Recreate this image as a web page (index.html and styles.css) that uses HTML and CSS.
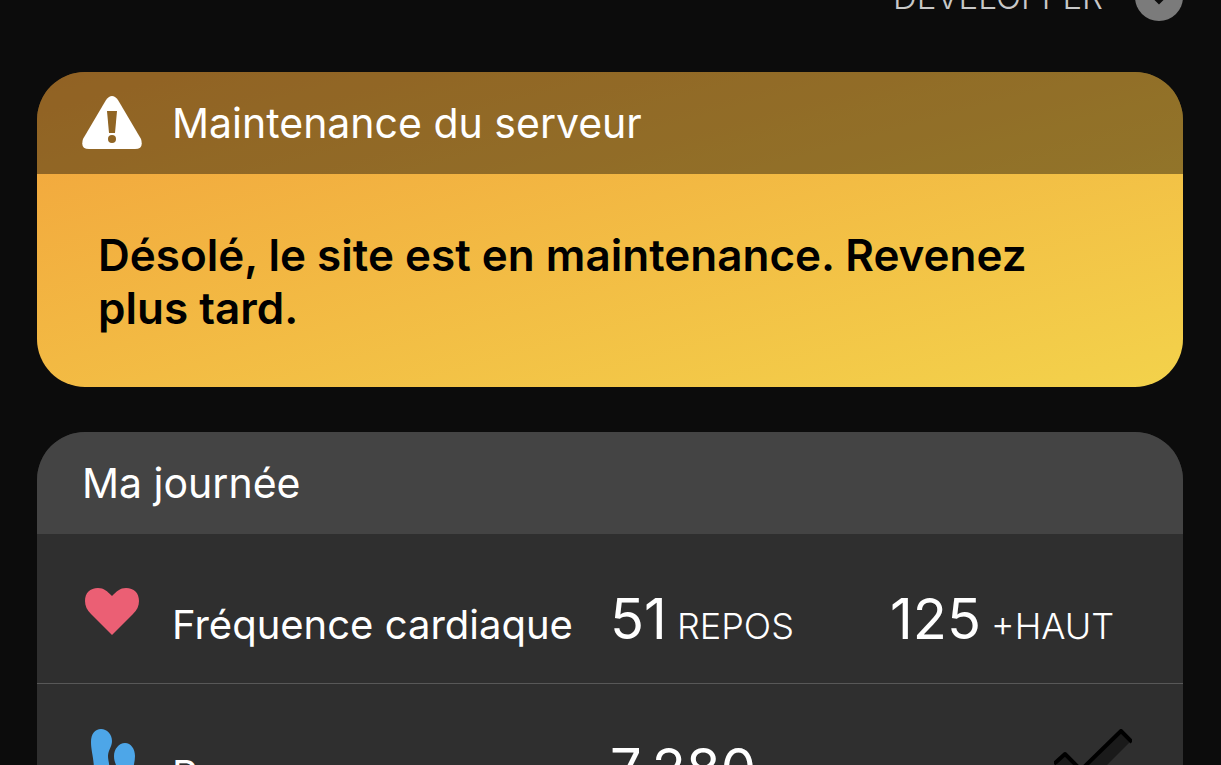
FILE: index.html
```
<!DOCTYPE html>
<html lang="fr">

<head>
    <meta charset="UTF-8">
    <meta name="viewport" content="width=device-width, initial-scale=1.0">
    <title>Ma journée</title>
    <link rel="stylesheet" href="styles.css">
</head>

<body>

    <header class="toolbar">
        <button class="expand-btn" type="button">
            <span>DÉVELOPPER</span>
            <svg class="expand-icon" viewBox="0 0 48 48" aria-hidden="true">
                <circle cx="24" cy="24" r="24" fill="#7b7b7b" />
                <path d="M15 19l9 9 9-9" fill="none" stroke="#0c0c0c" stroke-width="5" />
            </svg>
        </button>
    </header>

    <main>
        <section class="card alert">
            <div class="card-header">
                <svg class="alert-icon" viewBox="0 0 60 54" aria-hidden="true">
                    <path d="M24 4Q30-4 36 4L59 43Q62 53 53 53H7Q-2 53 1 43Z" fill="#fff" />
                    <path d="M25 15h10l-2 22h-6z" fill="#906524" />
                    <circle cx="30" cy="43" r="4" fill="#906524" />
                </svg>
                <h2>Maintenance du serveur</h2>
            </div>
            <p class="alert-message">Désolé, le site est en maintenance. Revenez plus tard.</p>
        </section>

        <section class="card day">
            <div class="card-header">
                <h2>Ma journée</h2>
            </div>
            <table class="stats">
                <tr>
                    <td class="col-icon">
                        <svg class="heart-icon" viewBox="0 0 54 47" aria-hidden="true">
                            <path d="M27 47L6 26C2 22 0 18 0 13C0 5 5 0 13 0C19 0 22 3 27 8C32 3 35 0 41 0C49 0 54 5 54 13C54 18 52 22 48 26Z" fill="#eb5f74" />
                        </svg>
                    </td>
                    <th class="col-name" scope="row">Fréquence cardiaque</th>
                    <td class="col-value">51<small> REPOS</small></td>
                    <td class="col-extra">125<small> +HAUT</small></td>
                </tr>
                <tr>
                    <td class="col-icon">
                        <svg class="steps-icon" viewBox="0 0 54 60" aria-hidden="true">
                            <path d="M6 13C6 5 10 0 16 0C22 0 27 5 27 12C27 18 23 21 23 27C23 32 25 35 24 42H9C9 29 6 22 6 13Z" fill="#4da6e8" />
                            <path d="M29 27C29 20 34 14 40 14C46 14 50 20 50 27C50 36 46 42 46 56H31C30 47 33 42 31 36C30 33 29 31 29 27Z" fill="#4da6e8" />
                        </svg>
                    </td>
                    <th class="col-name" scope="row">Pas</th>
                    <td class="col-value">7&#8239;280</td>
                    <td class="col-extra col-check">
                        <svg class="check-icon" viewBox="0 0 78 60" aria-hidden="true">
                            <path d="M0 33L11 23L27 39L67 0L78 11L29 60H27Z" fill="#1a1a1a" />
                            <path d="M0 35L11 25L27 41L67 2L78 13" fill="none" stroke="#000" stroke-width="4" stroke-linejoin="round" />
                        </svg>
                    </td>
                </tr>
            </table>
        </section>
    </main>

</body>

</html>
```
FILE: styles.css
```
body {
    margin: 0;
    padding: 0 38px 0 37px;
    font-family: 'Inter', sans-serif;
    background-color: #0c0c0c;
    color: #fff;
    height: 100vh;
    box-sizing: border-box;
    overflow: hidden;
}

/* Partly scrolled out at the top */
.toolbar {
    display: flex;
    justify-content: flex-end;
    margin-top: -28px;
    margin-bottom: 50px;
}

.expand-btn {
    display: flex;
    align-items: center;
    gap: 32px;
    height: 50px;
    padding: 0;
    border: none;
    background: none;
    color: #c8c8c8;
    font-family: inherit;
    font-size: 33px;
    font-weight: 350;
    cursor: pointer;
}

.expand-icon {
    width: 48px;
    height: 48px;
}

.card {
    border-radius: 48px;
    overflow: hidden;
    margin-bottom: 45px;
}

.card-header {
    display: flex;
    align-items: center;
    gap: 30px;
    height: 102px;
    padding: 0 45px;
}

.card-header h2 {
    margin: 0;
    font-size: 41px;
    font-weight: 400;
}

.alert {
    background: linear-gradient(to bottom right, #f2a33c, #f3d24b);
}

.alert .card-header {
    background-color: rgba(0, 0, 0, 0.4);
}

.alert-icon {
    width: 60px;
    height: 54px;
}

.alert-message {
    margin: 0;
    padding: 55px 61px 52px;
    color: #000;
    font-size: 44px;
    font-weight: 600;
    line-height: 53px;
}

.day {
    background-color: #2f2f2f;
}

.day .card-header {
    background-color: #444;
}

.stats {
    width: 100%;
    table-layout: fixed;
    border-collapse: separate;
    border-spacing: 0;
}

.stats td,
.stats th {
    height: 150px;
    padding: 51px 0 0;
    box-sizing: border-box;
    border-bottom: 1px solid #585858;
    text-align: left;
    vertical-align: baseline;
    font-weight: 400;
    line-height: 68px;
}

.stats .col-icon {
    width: 135px;
    padding-top: 45px;
    padding-left: 48px;
    vertical-align: top;
    line-height: 0;
}

.stats .col-name {
    width: 438px;
    font-size: 40px;
}

.stats .col-value,
.stats .col-extra {
    font-size: 56px;
}

.stats .col-extra {
    width: 293px;
}

.stats .col-check {
    padding-top: 45px;
    vertical-align: top;
}

.stats small {
    font-size: 36px;
    font-weight: 350;
}

.heart-icon {
    width: 54px;
    height: 47px;
    margin-top: 9px;
}

.steps-icon {
    width: 54px;
    height: 60px;
}

.check-icon {
    display: block;
    width: 78px;
    height: 60px;
    margin-left: auto;
    margin-right: 51px;
}
```
